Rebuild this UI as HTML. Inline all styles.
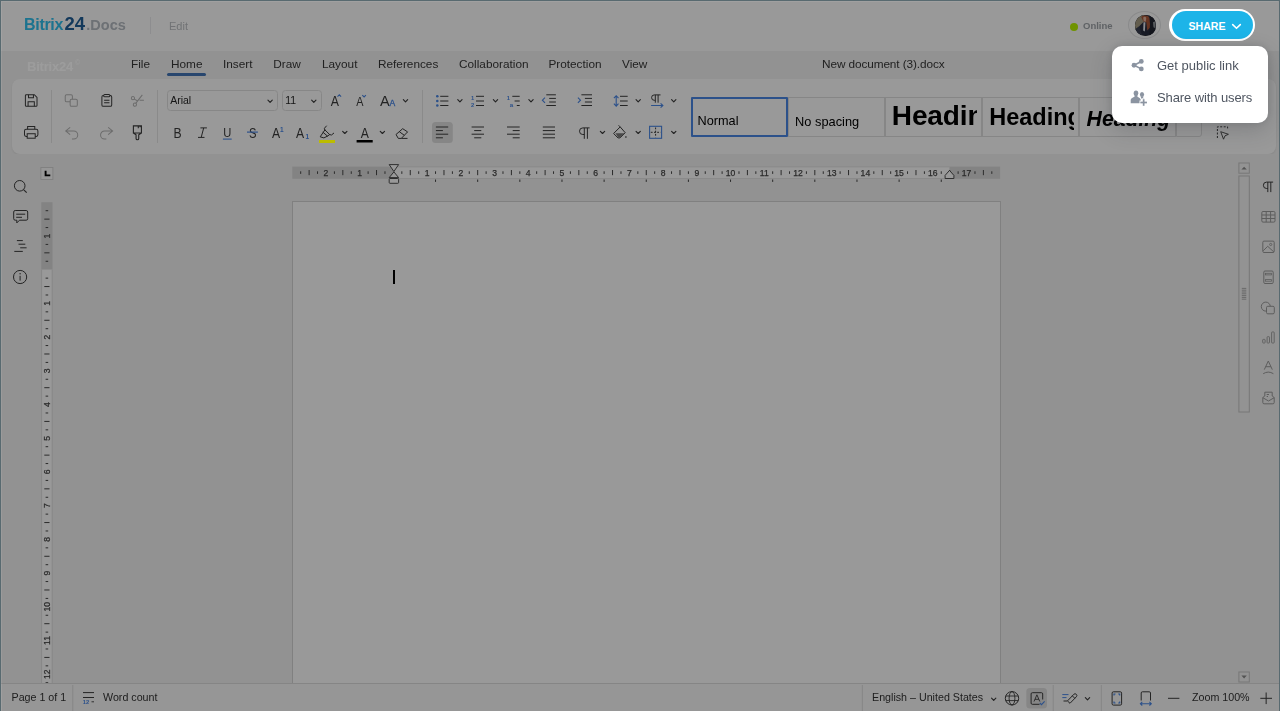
<!DOCTYPE html>
<html lang="en">
<head>
<meta charset="utf-8">
<title>Bitrix24.Docs</title>
<style>
*{box-sizing:border-box;margin:0;padding:0}
html,body{width:1280px;height:711px;overflow:hidden;background:#f3f3f3;font-family:"Liberation Sans",Arial,sans-serif;color:#333}
.abs{position:absolute}
#app{position:absolute;left:0;top:0;width:1280px;height:711px;overflow:hidden;background:#f3f3f3;will-change:transform}
#hdr{position:absolute;left:0;top:0;width:1280px;height:50.5px;background:#fff}
#logo{position:absolute;left:24px;top:12px;font-weight:bold;font-size:16px;line-height:24px;letter-spacing:-0.3px;white-space:nowrap}
#logo .b{color:#2fc0ee}
#logo .n{color:#215f98;font-size:18.5px;letter-spacing:-0.2px;margin-left:1.5px}
#logo .d{color:#b6bcc3;font-size:14.5px;letter-spacing:0;margin-left:1.5px}
#hsep{position:absolute;left:150px;top:17px;width:1px;height:17px;background:#ebecee}
#edit{position:absolute;left:169px;top:19px;font-size:11px;line-height:14px;color:#bcbfc3}
#online{position:absolute;left:1083px;top:20px;font-size:9.5px;line-height:12px;font-weight:bold;color:#9fa4a9;letter-spacing:0}
#odot{position:absolute;left:1070px;top:23px;width:8px;height:8px;border-radius:50%;background:#b9f500}
#avring{position:absolute;left:1128px;top:11px;width:33px;height:28px;border-radius:50%;border:1px solid #e6e7e8}
#av{position:absolute;left:1135px;top:15px;width:20.5px;height:20.5px;border-radius:50%;overflow:hidden;background:#2a2a30}
#tabs{position:absolute;left:0;top:51px;width:1280px;height:29px}
.tab{position:absolute;top:6px;font-size:11.8px;line-height:14px;color:#383838;white-space:nowrap}
#hline{position:absolute;left:166.8px;top:22.1px;width:39.4px;height:2.9px;background:#4375b7;border-radius:1.5px}
#ghost{position:absolute;left:27px;top:58.7px;font-size:13px;line-height:16px;font-weight:bold;color:#fff;opacity:.1;letter-spacing:-0.2px}
#ghost sup{font-size:7px;font-weight:normal;position:relative;top:-1px;left:2px;vertical-align:top;line-height:10px}
#tb{position:absolute;left:12px;top:79px;width:1264px;height:75px;background:#fff;border-radius:8px;box-shadow:0 1px 2px rgba(0,0,0,.07)}
.vsep{position:absolute;top:10.5px;width:1px;height:53px;background:#e7e7e7}
.combo{position:absolute;top:10.5px;height:21px;border:1px solid #e2e2e2;border-radius:3.5px;font-size:10.5px;line-height:19.6px;color:#262626;padding-left:2.2px;background:#fff}
.ic{position:absolute;overflow:visible}
.chev{position:absolute;width:7px;height:5px}
#alsel{position:absolute;left:420px;top:42px;width:20px;height:21px;border-radius:3px;background:#e0e0e0}
#gal{position:absolute;left:679.1px;top:17.5px;height:40px;width:512px;overflow:hidden}
.st{position:absolute;top:0;height:40px;width:98px;border:1px solid #e0e0e0;overflow:hidden;color:#000;white-space:nowrap}
.ci{position:absolute;left:6px;top:0;width:85.5px;height:38px;overflow:hidden}
.st span{position:absolute;left:0;bottom:5px;line-height:1}
#ws{position:absolute;left:0;top:154px;width:1280px;height:530px;background:#f3f3f3}
#page{position:absolute;left:291.5px;top:201.1px;width:709.3px;height:520px;background:#fff;border:1px solid #d6d6d6}
#caret{position:absolute;left:393px;top:270px;width:2px;height:14px;background:#000}
#sb{position:absolute;left:0;top:683px;width:1280px;height:28px;background:#fbfbfb;border-top:1px solid #dedede;font-size:10.7px;color:#333}
#sb .t{position:absolute;top:7px;line-height:13px;white-space:nowrap}
#ov{position:absolute;left:0;top:0;width:1280px;height:711px;background:rgba(0,0,0,.4)}
#frame{position:absolute;left:0;top:0;width:1280px;height:711px;border:1px solid #586a70;border-bottom:none;pointer-events:none}
#frame2{position:absolute;left:1px;top:1px;width:1277px;height:710px;border-left:1px solid rgba(255,255,255,.09);border-top:1px solid rgba(255,255,255,.07);pointer-events:none}
#ring{position:absolute;left:1169.3px;top:8.6px;width:85.7px;height:32.5px;border-radius:16.3px;background:#fff}
#share{position:absolute;left:1171.9px;top:11px;width:80.7px;height:27.9px;border-radius:14px;background:#1db4e8;color:#fff;font-weight:bold;font-size:10.6px;line-height:30px;letter-spacing:0;padding-left:16.6px}
#pop{position:absolute;left:1112px;top:46.3px;width:156px;height:76.7px;border-radius:10px;background:#fff;box-shadow:0 7px 21px rgba(40,46,56,.22),0 -1px 8px rgba(40,46,56,.12)}
.mi{position:absolute;left:45px;font-size:13px;line-height:16px;color:#4f5661;white-space:nowrap}
</style>
</head>
<body>
<div id="app">
  <div id="hdr">
    <div id="logo"><span class="b">Bitrix</span><span class="n">24</span><span class="d">.Docs</span></div>
    <div id="hsep"></div>
    <div id="edit">Edit</div>
    <div id="odot"></div>
    <div id="online">Online</div>
    <div id="avring"></div>
    <div id="av"><svg width="20.5" height="20.5" viewBox="0 0 20 20"><rect width="20" height="20" fill="#2b3042"/><path d="M0 0H9V6L5 10L2 14H0Z" fill="#a59c83"/><path d="M6 2C8 0 13 0 14 3L15 12L12 15L11 7L8 6Z" fill="#a8573a"/><path d="M8 2.5C9 1.5 10.5 1.5 11 3L10.5 6.5L8.5 6Z" fill="#e3b39b"/><path d="M8.3 7L10.2 7L9.6 16L8 15Z" fill="#e6e9f0"/><path d="M15 2H20V20H14Z" fill="#20242f"/><path d="M17.5 7L20 6V13L18 12Z" fill="#8f9499"/><path d="M0 14L4 11L7 20H0Z" fill="#3a3f50"/></svg></div>
  </div>
  <div id="tabs">
    <div class="tab" style="left:131px">File</div>
    <div class="tab" style="left:171px">Home</div>
    <div class="tab" style="left:223px">Insert</div>
    <div class="tab" style="left:273.3px">Draw</div>
    <div class="tab" style="left:322px">Layout</div>
    <div class="tab" style="left:378px">References</div>
    <div class="tab" style="left:459px">Collaboration</div>
    <div class="tab" style="left:548.4px">Protection</div>
    <div class="tab" style="left:622px">View</div>
    <div class="tab" style="left:822px;letter-spacing:-0.1px">New document (3).docx</div>
    <div id="hline"></div>
  </div>
  <div id="tb">
    <div class="vsep" style="left:39px"></div>
    <div class="vsep" style="left:145px"></div>
    <div class="vsep" style="left:410px"></div>
    <div class="combo" style="left:155px;width:111px">Arial</div>
    <div class="combo" style="left:270px;width:40px">11</div>
    <div id="gal">
      <div class="st" style="left:0;width:97px;border:none"><div class="ci"><span style="font-size:12.7px;left:0.5px;bottom:6.4px">Normal</span></div></div>
      <div class="st" style="left:96.500px;width:97.5px"><div class="ci"><span style="font-size:12.8px;left:0.5px;bottom:6.4px">No spacing</span></div></div>
      <div class="st" style="left:193.500px;width:97.5px"><div class="ci"><span style="font-size:28px;font-weight:bold;left:0.2px;bottom:5.9px;letter-spacing:-0.1px">Heading 1</span></div></div>
      <div class="st" style="left:290.500px;width:97.5px"><div class="ci"><span style="font-size:23.5px;font-weight:bold;left:0.6px;bottom:5.6px">Heading 2</span></div></div>
      <div class="st" style="left:387.500px;width:97.5px"><div class="ci"><span style="font-size:21.2px;font-weight:bold;font-style:italic;left:1px;bottom:6.2px">Heading 3</span></div></div>
      <div class="st" style="left:484.500px;width:26px;border-radius:0 0 3px 0"></div>
      <div class="abs" style="left:0;top:0;width:96.5px;height:40px;border:2px solid #4a87e7;border-radius:1px"></div>
    </div>
  </div>
  <svg class="abs" style="left:0;top:80px" width="1280" height="74" viewBox="0 80 1280 74"><g transform="translate(22.27 91.57) scale(0.893)" fill="none" stroke="#3c3c3c" stroke-width="1.12" ><path d="M4.500 3.500H13.500L16.500 6.500V15.500a1 1 0 0 1-1 1H4.500a1 1 0 0 1-1-1V4.500a1 1 0 0 1 1-1Z"/><path d="M7 3.500V7H12.500V3.500"/><path d="M6.500 16.500V11.500H13.500V16.500"/></g><g transform="translate(22.27 123.47) scale(0.893)" fill="none" stroke="#3c3c3c" stroke-width="1.12" ><path d="M6 6.500V3.500H14V6.500"/><rect x="2.500" y="6.500" width="15" height="8" rx="1.800"/><rect x="5.500" y="11.500" width="9" height="5" fill="#fff"/></g><g transform="translate(62.57 91.57) scale(0.893)" fill="none" stroke="#b4b4b4" stroke-width="1.12" ><rect x="3" y="3.500" width="8" height="8" rx="1.500"/><rect x="8.500" y="8.500" width="8" height="8" rx="1.500" fill="#fff"/></g><g transform="translate(97.87 91.57) scale(0.893)" fill="none" stroke="#3c3c3c" stroke-width="1.12" ><rect x="4.500" y="4.500" width="11" height="12" rx="1.500"/><rect x="6.500" y="3.200" width="7" height="2.600" rx="1.200" fill="#fff"/><path d="M7 9.700H13M7 12.500H13"/></g><g transform="translate(128.57 91.57) scale(0.893)" fill="none" stroke="#b4b4b4" stroke-width="1.12" ><circle cx="4.900" cy="7.400" r="1.800"/><circle cx="7.100" cy="14.700" r="1.800"/><path d="M8 13.200L15.400 3.700M6.400 8.500L10.300 10.600M12.300 9.700H17.200"/></g><g transform="translate(62.57 124.27) scale(0.893)" fill="none" stroke="#b4b4b4" stroke-width="1.12" ><path d="M8.500 3.500L3.500 7.500L8.500 11.500M3.500 7.500H12.500A4.500 4.500 0 0 1 12.500 16.500H10.500"/></g><g transform="translate(97.87 124.27) scale(0.893)" fill="none" stroke="#b4b4b4" stroke-width="1.12" ><path d="M11.500 3.500L16.500 7.500L11.500 11.500M16.500 7.500H7.500A4.500 4.500 0 0 0 7.500 16.500H9.500"/></g><g transform="translate(128.47 123.67) scale(0.893)" fill="none" stroke="#3c3c3c" stroke-width="1.23" ><path d="M5.500 2.500H14.500V10.500H5.500ZM11 2.500V5M13 2.500V4M5.500 10.500L8.500 12.500V16.500a1.500 1.500 0 0 0 3 0V12.500L14.500 10.500"/></g><text transform="translate(177.5 137.7) scale(0.87 1)" font-family="Liberation Sans, sans-serif" font-size="14" fill="#3c3c3c" font-weight="normal" text-anchor="middle" >B</text><path d="M200.4 127.9H206.9M198 137.4H204.5M203.7 127.9L201.2 137.4" stroke="#3c3c3c" stroke-width="1" fill="none"/><text transform="translate(227.3 136.8) scale(0.86 1)" font-family="Liberation Sans, sans-serif" font-size="13" fill="#3c3c3c" font-weight="normal" text-anchor="middle" >U</text><path d="M222.90 139.10H231.70" stroke="#4a87e7" stroke-width="1.1" fill="none"/><text transform="translate(252.7 137.7) scale(0.8 1)" font-family="Liberation Sans, sans-serif" font-size="14" fill="#3c3c3c" font-weight="normal" text-anchor="middle" >S</text><path d="M247.00 132.10H257.90" stroke="#4a87e7" stroke-width="1.2" fill="none"/><text transform="translate(276 137.7) scale(0.87 1)" font-family="Liberation Sans, sans-serif" font-size="14" fill="#3c3c3c" font-weight="normal" text-anchor="middle" >A</text><text transform="translate(281.9 131.6) scale(1 1)" font-family="Liberation Sans, sans-serif" font-size="6.5" fill="#4a87e7" font-weight="bold" text-anchor="middle" >1</text><text transform="translate(300.1 137.7) scale(0.87 1)" font-family="Liberation Sans, sans-serif" font-size="14" fill="#3c3c3c" font-weight="normal" text-anchor="middle" >A</text><text transform="translate(307.2 138.9) scale(1 1)" font-family="Liberation Sans, sans-serif" font-size="6.5" fill="#4a87e7" font-weight="bold" text-anchor="middle" >1</text><path d="M326.4 126L324.4 128.3L324.8 130M324.8 130L320.200 136.800L323.900 137.900L327.500 136.100L329.700 134.600L325 130M323.100 132.400L327.500 136.100M329.700 134.600L331.500 135L333.700 133.200" stroke="#3c3c3c" stroke-width="1" fill="none" stroke-linejoin="round" stroke-linecap="round"/><path d="M342.65 131.30L344.80 133.50L346.95 131.30" fill="none" stroke="#3c3c3c" stroke-width="1.15" stroke-linecap="round" stroke-linejoin="round"/><text transform="translate(364.9 137.7) scale(0.87 1)" font-family="Liberation Sans, sans-serif" font-size="14" fill="#3c3c3c" font-weight="normal" text-anchor="middle" >A</text><rect x="356.6" y="140" width="16.1" height="2.5" fill="#000"/><path d="M380.25 131.30L382.40 133.50L384.55 131.30" fill="none" stroke="#3c3c3c" stroke-width="1.15" stroke-linecap="round" stroke-linejoin="round"/><path d="M396 134.500L402.700 128.700L407.600 131.900L401.300 138.400H398.300ZM399.300 131.700L404.300 135.300M401.300 138.400H407.500" stroke="#3c3c3c" stroke-width="1" fill="none" stroke-linejoin="round"/><text transform="translate(334.8 105.7) scale(0.88 1)" font-family="Liberation Sans, sans-serif" font-size="14" fill="#3c3c3c" font-weight="normal" text-anchor="middle" >A</text><path d="M337.500 96.600L339.300 94.800L341.100 96.600" stroke="#4a87e7" stroke-width="1.1" fill="none"/><text transform="translate(359.8 105.7) scale(0.88 1)" font-family="Liberation Sans, sans-serif" font-size="12.3" fill="#3c3c3c" font-weight="normal" text-anchor="middle" >A</text><path d="M362.300 95.100L364.100 96.900L365.900 95.100" stroke="#4a87e7" stroke-width="1.1" fill="none"/><text transform="translate(384.8 105.7) scale(1 1)" font-family="Liberation Sans, sans-serif" font-size="14.5" fill="#3c3c3c" font-weight="normal" text-anchor="middle" >A</text><text transform="translate(392.3 105.7) scale(1 1)" font-family="Liberation Sans, sans-serif" font-size="8.6" fill="#4a87e7" font-weight="normal" text-anchor="middle" stroke="#4a87e7" stroke-width="0.3">A</text><path d="M403.35 99.65L405.50 101.85L407.65 99.65" fill="none" stroke="#3c3c3c" stroke-width="1.15" stroke-linecap="round" stroke-linejoin="round"/><circle cx="437.3" cy="96.3" r="1.3" fill="#4a87e7"/><path d="M440.20 96.30H448.40" stroke="#3c3c3c" stroke-width="1.0" fill="none"/><circle cx="437.3" cy="101.0" r="1.3" fill="#4a87e7"/><path d="M440.20 101.00H448.40" stroke="#3c3c3c" stroke-width="1.0" fill="none"/><circle cx="437.3" cy="105.5" r="1.3" fill="#4a87e7"/><path d="M440.20 105.50H448.40" stroke="#3c3c3c" stroke-width="1.0" fill="none"/><path d="M457.75 99.65L459.90 101.85L462.05 99.65" fill="none" stroke="#3c3c3c" stroke-width="1.15" stroke-linecap="round" stroke-linejoin="round"/><text transform="translate(472.6 99.8) scale(1 1)" font-family="Liberation Sans, sans-serif" font-size="5.8" fill="#4a87e7" font-weight="bold" text-anchor="middle" >1</text><text transform="translate(472.6 106.9) scale(1 1)" font-family="Liberation Sans, sans-serif" font-size="5.8" fill="#4a87e7" font-weight="bold" text-anchor="middle" >2</text><path d="M476.00 96.30H484.00" stroke="#3c3c3c" stroke-width="1.0" fill="none"/><path d="M476.00 101.00H484.00" stroke="#3c3c3c" stroke-width="1.0" fill="none"/><path d="M476.00 105.50H484.00" stroke="#3c3c3c" stroke-width="1.0" fill="none"/><path d="M493.35 99.65L495.50 101.85L497.65 99.65" fill="none" stroke="#3c3c3c" stroke-width="1.15" stroke-linecap="round" stroke-linejoin="round"/><text transform="translate(508.3 99.8) scale(1 1)" font-family="Liberation Sans, sans-serif" font-size="5.8" fill="#4a87e7" font-weight="bold" text-anchor="middle" >1</text><text transform="translate(511.4 106.9) scale(1 1)" font-family="Liberation Sans, sans-serif" font-size="6.2" fill="#4a87e7" font-weight="bold" text-anchor="middle" >a</text><path d="M512.30 96.30H519.70" stroke="#3c3c3c" stroke-width="1.0" fill="none"/><path d="M514.60 101.00H519.70" stroke="#3c3c3c" stroke-width="1.0" fill="none"/><path d="M516.80 105.50H519.70" stroke="#3c3c3c" stroke-width="1.0" fill="none"/><path d="M528.85 99.65L531.00 101.85L533.15 99.65" fill="none" stroke="#3c3c3c" stroke-width="1.15" stroke-linecap="round" stroke-linejoin="round"/><path d="M546.30 94.80H555.90" stroke="#3c3c3c" stroke-width="1.0" fill="none"/><path d="M549.20 98.40H555.90" stroke="#3c3c3c" stroke-width="1.0" fill="none"/><path d="M549.20 102.00H555.90" stroke="#3c3c3c" stroke-width="1.0" fill="none"/><path d="M546.30 105.50H555.90" stroke="#3c3c3c" stroke-width="1.0" fill="none"/><path d="M545 97.600L542.400 100.200L545 102.800" stroke="#4a87e7" stroke-width="1.1" fill="none"/><path d="M581.40 94.80H592.00" stroke="#3c3c3c" stroke-width="1.0" fill="none"/><path d="M584.90 98.40H592.00" stroke="#3c3c3c" stroke-width="1.0" fill="none"/><path d="M584.90 102.00H592.00" stroke="#3c3c3c" stroke-width="1.0" fill="none"/><path d="M581.40 105.50H592.00" stroke="#3c3c3c" stroke-width="1.0" fill="none"/><path d="M577.900 97.600L580.500 100.200L577.900 102.800" stroke="#4a87e7" stroke-width="1.1" fill="none"/><path d="M616.200 95.800V106M613.900 98.100L616.200 95.700L618.500 98.100M613.900 103.700L616.200 106.100L618.500 103.700" stroke="#4a87e7" stroke-width="1.1" fill="none"/><path d="M620.00 96.30H627.70" stroke="#3c3c3c" stroke-width="1.0" fill="none"/><path d="M620.00 101.00H627.70" stroke="#3c3c3c" stroke-width="1.0" fill="none"/><path d="M620.00 105.50H627.70" stroke="#3c3c3c" stroke-width="1.0" fill="none"/><path d="M636.05 99.65L638.20 101.85L640.35 99.65" fill="none" stroke="#3c3c3c" stroke-width="1.15" stroke-linecap="round" stroke-linejoin="round"/><path d="M660.500 94.900H654.300a2.700 2.700 0 0 0 0 5.400H655.300M655.300 94.900V102.700M658.100 94.900V102.700" stroke="#3c3c3c" stroke-width="1" fill="none"/><path d="M651.100 105.500H662.800M660.600 103.300L662.900 105.500L660.600 107.700" stroke="#4a87e7" stroke-width="1.1" fill="none"/><path d="M671.60 99.65L673.75 101.85L675.90 99.65" fill="none" stroke="#3c3c3c" stroke-width="1.15" stroke-linecap="round" stroke-linejoin="round"/><rect x="432" y="122.1" width="20.8" height="20.9" rx="3.5" fill="#e0e0e0"/><path d="M435.90 127.00H448.20" stroke="#3c3c3c" stroke-width="1.0" fill="none"/><path d="M471.60 127.00H484.00" stroke="#3c3c3c" stroke-width="1.0" fill="none"/><path d="M507.00 127.00H519.70" stroke="#3c3c3c" stroke-width="1.0" fill="none"/><path d="M542.80 127.00H555.00" stroke="#3c3c3c" stroke-width="1.0" fill="none"/><path d="M435.90 130.60H442.90" stroke="#3c3c3c" stroke-width="1.0" fill="none"/><path d="M474.20 130.60H481.30" stroke="#3c3c3c" stroke-width="1.0" fill="none"/><path d="M512.70 130.60H519.70" stroke="#3c3c3c" stroke-width="1.0" fill="none"/><path d="M542.80 130.60H555.00" stroke="#3c3c3c" stroke-width="1.0" fill="none"/><path d="M435.90 134.20H448.20" stroke="#3c3c3c" stroke-width="1.0" fill="none"/><path d="M471.60 134.20H484.00" stroke="#3c3c3c" stroke-width="1.0" fill="none"/><path d="M507.00 134.20H519.70" stroke="#3c3c3c" stroke-width="1.0" fill="none"/><path d="M542.80 134.20H555.00" stroke="#3c3c3c" stroke-width="1.0" fill="none"/><path d="M435.90 137.80H442.90" stroke="#3c3c3c" stroke-width="1.0" fill="none"/><path d="M474.20 137.80H481.30" stroke="#3c3c3c" stroke-width="1.0" fill="none"/><path d="M512.70 137.80H519.70" stroke="#3c3c3c" stroke-width="1.0" fill="none"/><path d="M542.80 137.80H555.00" stroke="#3c3c3c" stroke-width="1.0" fill="none"/><path d="M589.600 127.900H582.800a3.300 3.300 0 0 0 0 6.600H584.300M584.300 127.900V138.800M587.400 127.900V138.800" stroke="#3c3c3c" stroke-width="1" fill="none"/><path d="M600.35 131.30L602.50 133.50L604.65 131.30" fill="none" stroke="#3c3c3c" stroke-width="1.15" stroke-linecap="round" stroke-linejoin="round"/><path d="M618.600 125.300L620.200 126.900M620.200 126.900L613.600 133.500L618 137.900H620L625.200 132.700L620.200 126.900Z" stroke="#3c3c3c" stroke-width="1" fill="none" stroke-linejoin="round"/><path d="M615.400 133.200H624.400L620 137.400H618.200Z" fill="#7a7a7a" stroke="none"/><circle cx="625.900" cy="137" r="0.900" fill="#777"/><path d="M636.05 131.30L638.20 133.50L640.35 131.30" fill="none" stroke="#3c3c3c" stroke-width="1.15" stroke-linecap="round" stroke-linejoin="round"/><rect x="649.600" y="126.300" width="12" height="12" stroke="#4a87e7" stroke-width="1.1" fill="none"/><path d="M655.600 127.500V137.300M650.800 132.300H660.600" stroke="#3c3c3c" stroke-width="1" stroke-dasharray="1.8 1.4" fill="none"/><path d="M671.60 131.30L673.75 133.50L675.90 131.30" fill="none" stroke="#3c3c3c" stroke-width="1.15" stroke-linecap="round" stroke-linejoin="round"/><path d="M267.95 100.20L270.10 102.40L272.25 100.20" fill="none" stroke="#3c3c3c" stroke-width="1.15" stroke-linecap="round" stroke-linejoin="round"/><path d="M311.65 100.20L313.80 102.40L315.95 100.20" fill="none" stroke="#3c3c3c" stroke-width="1.15" stroke-linecap="round" stroke-linejoin="round"/><path d="M1217.400 138V126.800H1227.600V129.500" stroke="#3c3c3c" stroke-width="1" stroke-dasharray="2 1.500" fill="none"/><path d="M1220.700 131.700L1228.400 134.300L1225 135.800L1223.500 139.200Z" stroke="#3c3c3c" stroke-width="0.9" fill="none" stroke-linejoin="round"/></svg>
  <div id="ws"></div>
  <div id="page"></div>
  <div id="caret"></div>
  <svg class="abs" style="left:0;top:154px" width="1280" height="530" viewBox="0 154 1280 530"><rect x="292.3" y="166.6" width="707.80" height="12.20" fill="#dbdbdb"/><rect x="393.4" y="166.6" width="556.00" height="12.20" fill="#ffffff"/><path d="M393.40 166.90H949.40" stroke="#e2e2e2" stroke-width="0.8" fill="none"/><path d="M393.40 178.50H949.40" stroke="#e2e2e2" stroke-width="0.8" fill="none"/><path d="M384.97 171.30V173.90" stroke="#484848" stroke-width="1.0" fill="none"/><path d="M376.54 170.00V175.20" stroke="#484848" stroke-width="1.0" fill="none"/><path d="M368.11 171.30V173.90" stroke="#484848" stroke-width="1.0" fill="none"/><path d="M351.26 171.30V173.90" stroke="#484848" stroke-width="1.0" fill="none"/><path d="M342.83 170.00V175.20" stroke="#484848" stroke-width="1.0" fill="none"/><path d="M334.40 171.30V173.90" stroke="#484848" stroke-width="1.0" fill="none"/><path d="M317.54 171.30V173.90" stroke="#484848" stroke-width="1.0" fill="none"/><path d="M309.12 170.00V175.20" stroke="#484848" stroke-width="1.0" fill="none"/><path d="M300.69 171.30V173.90" stroke="#484848" stroke-width="1.0" fill="none"/><path d="M401.83 171.30V173.90" stroke="#484848" stroke-width="1.0" fill="none"/><path d="M410.26 170.00V175.20" stroke="#484848" stroke-width="1.0" fill="none"/><path d="M418.69 171.30V173.90" stroke="#484848" stroke-width="1.0" fill="none"/><path d="M435.54 171.30V173.90" stroke="#484848" stroke-width="1.0" fill="none"/><path d="M443.97 170.00V175.20" stroke="#484848" stroke-width="1.0" fill="none"/><path d="M452.40 171.30V173.90" stroke="#484848" stroke-width="1.0" fill="none"/><path d="M469.26 171.30V173.90" stroke="#484848" stroke-width="1.0" fill="none"/><path d="M477.68 170.00V175.20" stroke="#484848" stroke-width="1.0" fill="none"/><path d="M486.11 171.30V173.90" stroke="#484848" stroke-width="1.0" fill="none"/><path d="M502.97 171.30V173.90" stroke="#484848" stroke-width="1.0" fill="none"/><path d="M511.40 170.00V175.20" stroke="#484848" stroke-width="1.0" fill="none"/><path d="M519.83 171.30V173.90" stroke="#484848" stroke-width="1.0" fill="none"/><path d="M536.68 171.30V173.90" stroke="#484848" stroke-width="1.0" fill="none"/><path d="M545.11 170.00V175.20" stroke="#484848" stroke-width="1.0" fill="none"/><path d="M553.54 171.30V173.90" stroke="#484848" stroke-width="1.0" fill="none"/><path d="M570.40 171.30V173.90" stroke="#484848" stroke-width="1.0" fill="none"/><path d="M578.83 170.00V175.20" stroke="#484848" stroke-width="1.0" fill="none"/><path d="M587.26 171.30V173.90" stroke="#484848" stroke-width="1.0" fill="none"/><path d="M604.11 171.30V173.90" stroke="#484848" stroke-width="1.0" fill="none"/><path d="M612.54 170.00V175.20" stroke="#484848" stroke-width="1.0" fill="none"/><path d="M620.97 171.30V173.90" stroke="#484848" stroke-width="1.0" fill="none"/><path d="M637.83 171.30V173.90" stroke="#484848" stroke-width="1.0" fill="none"/><path d="M646.25 170.00V175.20" stroke="#484848" stroke-width="1.0" fill="none"/><path d="M654.68 171.30V173.90" stroke="#484848" stroke-width="1.0" fill="none"/><path d="M671.54 171.30V173.90" stroke="#484848" stroke-width="1.0" fill="none"/><path d="M679.97 170.00V175.20" stroke="#484848" stroke-width="1.0" fill="none"/><path d="M688.40 171.30V173.90" stroke="#484848" stroke-width="1.0" fill="none"/><path d="M705.25 171.30V173.90" stroke="#484848" stroke-width="1.0" fill="none"/><path d="M713.68 170.00V175.20" stroke="#484848" stroke-width="1.0" fill="none"/><path d="M722.11 171.30V173.90" stroke="#484848" stroke-width="1.0" fill="none"/><path d="M738.97 171.30V173.90" stroke="#484848" stroke-width="1.0" fill="none"/><path d="M747.40 170.00V175.20" stroke="#484848" stroke-width="1.0" fill="none"/><path d="M755.83 171.30V173.90" stroke="#484848" stroke-width="1.0" fill="none"/><path d="M772.68 171.30V173.90" stroke="#484848" stroke-width="1.0" fill="none"/><path d="M781.11 170.00V175.20" stroke="#484848" stroke-width="1.0" fill="none"/><path d="M789.54 171.30V173.90" stroke="#484848" stroke-width="1.0" fill="none"/><path d="M806.40 171.30V173.90" stroke="#484848" stroke-width="1.0" fill="none"/><path d="M814.82 170.00V175.20" stroke="#484848" stroke-width="1.0" fill="none"/><path d="M823.25 171.30V173.90" stroke="#484848" stroke-width="1.0" fill="none"/><path d="M840.11 171.30V173.90" stroke="#484848" stroke-width="1.0" fill="none"/><path d="M848.54 170.00V175.20" stroke="#484848" stroke-width="1.0" fill="none"/><path d="M856.97 171.30V173.90" stroke="#484848" stroke-width="1.0" fill="none"/><path d="M873.82 171.30V173.90" stroke="#484848" stroke-width="1.0" fill="none"/><path d="M882.25 170.00V175.20" stroke="#484848" stroke-width="1.0" fill="none"/><path d="M890.68 171.30V173.90" stroke="#484848" stroke-width="1.0" fill="none"/><path d="M907.54 171.30V173.90" stroke="#484848" stroke-width="1.0" fill="none"/><path d="M915.97 170.00V175.20" stroke="#484848" stroke-width="1.0" fill="none"/><path d="M924.40 171.30V173.90" stroke="#484848" stroke-width="1.0" fill="none"/><path d="M941.25 171.30V173.90" stroke="#484848" stroke-width="1.0" fill="none"/><path d="M949.68 170.00V175.20" stroke="#484848" stroke-width="1.0" fill="none"/><path d="M958.11 171.30V173.90" stroke="#484848" stroke-width="1.0" fill="none"/><path d="M974.97 171.30V173.90" stroke="#484848" stroke-width="1.0" fill="none"/><path d="M983.39 170.00V175.20" stroke="#484848" stroke-width="1.0" fill="none"/><path d="M991.82 171.30V173.90" stroke="#484848" stroke-width="1.0" fill="none"/><text x="359.69" y="175.70" font-family="Liberation Sans, sans-serif" font-size="8.6" fill="#484848" stroke="#484848" stroke-width="0.25" text-anchor="middle">1</text><text x="325.97" y="175.70" font-family="Liberation Sans, sans-serif" font-size="8.6" fill="#484848" stroke="#484848" stroke-width="0.25" text-anchor="middle">2</text><text x="427.11" y="175.70" font-family="Liberation Sans, sans-serif" font-size="8.6" fill="#484848" stroke="#484848" stroke-width="0.25" text-anchor="middle">1</text><text x="460.83" y="175.70" font-family="Liberation Sans, sans-serif" font-size="8.6" fill="#484848" stroke="#484848" stroke-width="0.25" text-anchor="middle">2</text><text x="494.54" y="175.70" font-family="Liberation Sans, sans-serif" font-size="8.6" fill="#484848" stroke="#484848" stroke-width="0.25" text-anchor="middle">3</text><text x="528.26" y="175.70" font-family="Liberation Sans, sans-serif" font-size="8.6" fill="#484848" stroke="#484848" stroke-width="0.25" text-anchor="middle">4</text><text x="561.97" y="175.70" font-family="Liberation Sans, sans-serif" font-size="8.6" fill="#484848" stroke="#484848" stroke-width="0.25" text-anchor="middle">5</text><text x="595.68" y="175.70" font-family="Liberation Sans, sans-serif" font-size="8.6" fill="#484848" stroke="#484848" stroke-width="0.25" text-anchor="middle">6</text><text x="629.40" y="175.70" font-family="Liberation Sans, sans-serif" font-size="8.6" fill="#484848" stroke="#484848" stroke-width="0.25" text-anchor="middle">7</text><text x="663.11" y="175.70" font-family="Liberation Sans, sans-serif" font-size="8.6" fill="#484848" stroke="#484848" stroke-width="0.25" text-anchor="middle">8</text><text x="696.83" y="175.70" font-family="Liberation Sans, sans-serif" font-size="8.6" fill="#484848" stroke="#484848" stroke-width="0.25" text-anchor="middle">9</text><text x="730.54" y="175.70" font-family="Liberation Sans, sans-serif" font-size="8.6" fill="#484848" stroke="#484848" stroke-width="0.25" text-anchor="middle">10</text><text x="764.25" y="175.70" font-family="Liberation Sans, sans-serif" font-size="8.6" fill="#484848" stroke="#484848" stroke-width="0.25" text-anchor="middle">11</text><text x="797.97" y="175.70" font-family="Liberation Sans, sans-serif" font-size="8.6" fill="#484848" stroke="#484848" stroke-width="0.25" text-anchor="middle">12</text><text x="831.68" y="175.70" font-family="Liberation Sans, sans-serif" font-size="8.6" fill="#484848" stroke="#484848" stroke-width="0.25" text-anchor="middle">13</text><text x="865.40" y="175.70" font-family="Liberation Sans, sans-serif" font-size="8.6" fill="#484848" stroke="#484848" stroke-width="0.25" text-anchor="middle">14</text><text x="899.11" y="175.70" font-family="Liberation Sans, sans-serif" font-size="8.6" fill="#484848" stroke="#484848" stroke-width="0.25" text-anchor="middle">15</text><text x="932.82" y="175.70" font-family="Liberation Sans, sans-serif" font-size="8.6" fill="#484848" stroke="#484848" stroke-width="0.25" text-anchor="middle">16</text><text x="966.54" y="175.70" font-family="Liberation Sans, sans-serif" font-size="8.6" fill="#484848" stroke="#484848" stroke-width="0.25" text-anchor="middle">17</text><path d="M435.54 179.50V181.90" stroke="#444" stroke-width="1.0" fill="none"/><path d="M477.68 179.50V181.90" stroke="#444" stroke-width="1.0" fill="none"/><path d="M519.83 179.50V181.90" stroke="#444" stroke-width="1.0" fill="none"/><path d="M561.97 179.50V181.90" stroke="#444" stroke-width="1.0" fill="none"/><path d="M604.11 179.50V181.90" stroke="#444" stroke-width="1.0" fill="none"/><path d="M646.25 179.50V181.90" stroke="#444" stroke-width="1.0" fill="none"/><path d="M688.40 179.50V181.90" stroke="#444" stroke-width="1.0" fill="none"/><path d="M730.54 179.50V181.90" stroke="#444" stroke-width="1.0" fill="none"/><path d="M772.68 179.50V181.90" stroke="#444" stroke-width="1.0" fill="none"/><path d="M814.82 179.50V181.90" stroke="#444" stroke-width="1.0" fill="none"/><path d="M856.97 179.50V181.90" stroke="#444" stroke-width="1.0" fill="none"/><path d="M899.11 179.50V181.90" stroke="#444" stroke-width="1.0" fill="none"/><path d="M941.25 179.50V181.90" stroke="#444" stroke-width="1.0" fill="none"/><path d="M389.2 164.6H398.6L393.9 171.5Z" fill="#fff" stroke="#3c3c3c" stroke-width="0.9" stroke-linejoin="round"/><path d="M393.9 171.9L398.6 177.6H389.2Z" fill="#fff" stroke="#3c3c3c" stroke-width="0.9" stroke-linejoin="round"/><rect x="389.2" y="178.5" width="9.4" height="4.8" rx="0.8" fill="#fff" stroke="#3c3c3c" stroke-width="0.9"/><path d="M949.5 170.4L953.9 175.4V178.5H945.1V175.4Z" fill="#fff" stroke="#3c3c3c" stroke-width="0.9" stroke-linejoin="round"/><rect x="40.9" y="167.5" width="12" height="12" fill="#fcfcfc" stroke="#d4d4d4" stroke-width="0.9"/><path d="M45.6 170.7V175.4H50.3" fill="none" stroke="#000" stroke-width="1.9"/><rect x="41.3" y="202.2" width="11.20" height="67.50" fill="#dbdbdb"/><rect x="41.3" y="269.7" width="11.20" height="414.30" fill="#ffffff"/><path d="M41.60 269.70V684.00" stroke="#dcdcdc" stroke-width="0.9" fill="none"/><path d="M52.20 269.70V684.00" stroke="#dcdcdc" stroke-width="0.9" fill="none"/><path d="M45.60 261.27H48.20" stroke="#484848" stroke-width="1.0" fill="none"/><path d="M44.30 252.84H49.50" stroke="#484848" stroke-width="1.0" fill="none"/><path d="M45.60 244.41H48.20" stroke="#484848" stroke-width="1.0" fill="none"/><text transform="translate(50.00 235.99) rotate(-90)" font-family="Liberation Sans, sans-serif" font-size="8.6" fill="#484848" stroke="#484848" stroke-width="0.25" text-anchor="middle">1</text><path d="M45.60 227.56H48.20" stroke="#484848" stroke-width="1.0" fill="none"/><path d="M44.30 219.13H49.50" stroke="#484848" stroke-width="1.0" fill="none"/><path d="M45.60 210.70H48.20" stroke="#484848" stroke-width="1.0" fill="none"/><path d="M45.60 278.13H48.20" stroke="#484848" stroke-width="1.0" fill="none"/><path d="M44.30 286.56H49.50" stroke="#484848" stroke-width="1.0" fill="none"/><path d="M45.60 294.99H48.20" stroke="#484848" stroke-width="1.0" fill="none"/><text transform="translate(50.00 303.41) rotate(-90)" font-family="Liberation Sans, sans-serif" font-size="8.6" fill="#484848" stroke="#484848" stroke-width="0.25" text-anchor="middle">1</text><path d="M45.60 311.84H48.20" stroke="#484848" stroke-width="1.0" fill="none"/><path d="M44.30 320.27H49.50" stroke="#484848" stroke-width="1.0" fill="none"/><path d="M45.60 328.70H48.20" stroke="#484848" stroke-width="1.0" fill="none"/><text transform="translate(50.00 337.13) rotate(-90)" font-family="Liberation Sans, sans-serif" font-size="8.6" fill="#484848" stroke="#484848" stroke-width="0.25" text-anchor="middle">2</text><path d="M45.60 345.56H48.20" stroke="#484848" stroke-width="1.0" fill="none"/><path d="M44.30 353.99H49.50" stroke="#484848" stroke-width="1.0" fill="none"/><path d="M45.60 362.41H48.20" stroke="#484848" stroke-width="1.0" fill="none"/><text transform="translate(50.00 370.84) rotate(-90)" font-family="Liberation Sans, sans-serif" font-size="8.6" fill="#484848" stroke="#484848" stroke-width="0.25" text-anchor="middle">3</text><path d="M45.60 379.27H48.20" stroke="#484848" stroke-width="1.0" fill="none"/><path d="M44.30 387.70H49.50" stroke="#484848" stroke-width="1.0" fill="none"/><path d="M45.60 396.13H48.20" stroke="#484848" stroke-width="1.0" fill="none"/><text transform="translate(50.00 404.56) rotate(-90)" font-family="Liberation Sans, sans-serif" font-size="8.6" fill="#484848" stroke="#484848" stroke-width="0.25" text-anchor="middle">4</text><path d="M45.60 412.98H48.20" stroke="#484848" stroke-width="1.0" fill="none"/><path d="M44.30 421.41H49.50" stroke="#484848" stroke-width="1.0" fill="none"/><path d="M45.60 429.84H48.20" stroke="#484848" stroke-width="1.0" fill="none"/><text transform="translate(50.00 438.27) rotate(-90)" font-family="Liberation Sans, sans-serif" font-size="8.6" fill="#484848" stroke="#484848" stroke-width="0.25" text-anchor="middle">5</text><path d="M45.60 446.70H48.20" stroke="#484848" stroke-width="1.0" fill="none"/><path d="M44.30 455.13H49.50" stroke="#484848" stroke-width="1.0" fill="none"/><path d="M45.60 463.56H48.20" stroke="#484848" stroke-width="1.0" fill="none"/><text transform="translate(50.00 471.98) rotate(-90)" font-family="Liberation Sans, sans-serif" font-size="8.6" fill="#484848" stroke="#484848" stroke-width="0.25" text-anchor="middle">6</text><path d="M45.60 480.41H48.20" stroke="#484848" stroke-width="1.0" fill="none"/><path d="M44.30 488.84H49.50" stroke="#484848" stroke-width="1.0" fill="none"/><path d="M45.60 497.27H48.20" stroke="#484848" stroke-width="1.0" fill="none"/><text transform="translate(50.00 505.70) rotate(-90)" font-family="Liberation Sans, sans-serif" font-size="8.6" fill="#484848" stroke="#484848" stroke-width="0.25" text-anchor="middle">7</text><path d="M45.60 514.13H48.20" stroke="#484848" stroke-width="1.0" fill="none"/><path d="M44.30 522.55H49.50" stroke="#484848" stroke-width="1.0" fill="none"/><path d="M45.60 530.98H48.20" stroke="#484848" stroke-width="1.0" fill="none"/><text transform="translate(50.00 539.41) rotate(-90)" font-family="Liberation Sans, sans-serif" font-size="8.6" fill="#484848" stroke="#484848" stroke-width="0.25" text-anchor="middle">8</text><path d="M45.60 547.84H48.20" stroke="#484848" stroke-width="1.0" fill="none"/><path d="M44.30 556.27H49.50" stroke="#484848" stroke-width="1.0" fill="none"/><path d="M45.60 564.70H48.20" stroke="#484848" stroke-width="1.0" fill="none"/><text transform="translate(50.00 573.13) rotate(-90)" font-family="Liberation Sans, sans-serif" font-size="8.6" fill="#484848" stroke="#484848" stroke-width="0.25" text-anchor="middle">9</text><path d="M45.60 581.55H48.20" stroke="#484848" stroke-width="1.0" fill="none"/><path d="M44.30 589.98H49.50" stroke="#484848" stroke-width="1.0" fill="none"/><path d="M45.60 598.41H48.20" stroke="#484848" stroke-width="1.0" fill="none"/><text transform="translate(50.00 606.84) rotate(-90)" font-family="Liberation Sans, sans-serif" font-size="8.6" fill="#484848" stroke="#484848" stroke-width="0.25" text-anchor="middle">10</text><path d="M45.60 615.27H48.20" stroke="#484848" stroke-width="1.0" fill="none"/><path d="M44.30 623.70H49.50" stroke="#484848" stroke-width="1.0" fill="none"/><path d="M45.60 632.13H48.20" stroke="#484848" stroke-width="1.0" fill="none"/><text transform="translate(50.00 640.55) rotate(-90)" font-family="Liberation Sans, sans-serif" font-size="8.6" fill="#484848" stroke="#484848" stroke-width="0.25" text-anchor="middle">11</text><path d="M45.60 648.98H48.20" stroke="#484848" stroke-width="1.0" fill="none"/><path d="M44.30 657.41H49.50" stroke="#484848" stroke-width="1.0" fill="none"/><path d="M45.60 665.84H48.20" stroke="#484848" stroke-width="1.0" fill="none"/><text transform="translate(50.00 674.27) rotate(-90)" font-family="Liberation Sans, sans-serif" font-size="8.6" fill="#484848" stroke="#484848" stroke-width="0.25" text-anchor="middle">12</text><path d="M45.60 682.70H48.20" stroke="#484848" stroke-width="1.0" fill="none"/><circle cx="19.7" cy="185.8" r="5.3" fill="none" stroke="#3c3c3c" stroke-width="1"/><path d="M23.5 189.600L26.700 192.600" stroke="#3c3c3c" stroke-width="1.1" fill="none"/><path d="M15.200 210.500H26.200a1.500 1.500 0 0 1 1.500 1.500V218.700a1.500 1.500 0 0 1-1.500 1.500H19.500L16.800 222.900V220.200H15.200a1.500 1.500 0 0 1-1.500-1.500V212a1.500 1.500 0 0 1 1.500-1.500Z" fill="none" stroke="#3c3c3c" stroke-width="1" stroke-linejoin="round"/><path d="M16.20 214.20H25.20" stroke="#3c3c3c" stroke-width="1.0" fill="none"/><path d="M16.20 217.30H22.00" stroke="#3c3c3c" stroke-width="1.0" fill="none"/><path d="M16.90 240.60H22.80" stroke="#3c3c3c" stroke-width="1.0" fill="none"/><path d="M18.50 244.20H25.30" stroke="#3c3c3c" stroke-width="1.0" fill="none"/><path d="M20.20 247.80H26.60" stroke="#3c3c3c" stroke-width="1.0" fill="none"/><path d="M14.30 251.40H22.80" stroke="#3c3c3c" stroke-width="1.0" fill="none"/><circle cx="20.100" cy="277" r="6.600" fill="none" stroke="#3c3c3c" stroke-width="1"/><path d="M20.10 275.80V280.60" stroke="#3c3c3c" stroke-width="1.0" fill="none"/><circle cx="20.100" cy="273.800" r="0.700" fill="#3c3c3c"/><path d="M1273.100 182.100H1266.600a3.200 3.200 0 0 0 0 6.400H1267.800M1267.800 182.100V192.100M1270.800 182.100V192.100" stroke="#3c3c3c" stroke-width="1" fill="none"/><rect x="1261.800" y="211.500" width="13.200" height="10.600" rx="1.200" fill="none" stroke="#9c9c9c" stroke-width="1"/><path d="M1261.800 215H1275M1261.800 218.500H1275M1266.200 211.500V222.100M1270.600 211.500V222.100" stroke="#9c9c9c" stroke-width="1" fill="none"/><rect x="1262.800" y="241.100" width="11.400" height="11.400" rx="1.200" fill="none" stroke="#9c9c9c" stroke-width="1"/><path d="M1263.200 250.800L1267.700 246.300L1273.900 252" stroke="#9c9c9c" stroke-width="1" fill="none"/><circle cx="1270.700" cy="244.500" r="1.100" fill="none" stroke="#9c9c9c" stroke-width="0.9"/><rect x="1263.800" y="271" width="9.400" height="12.500" rx="1.200" fill="none" stroke="#9c9c9c" stroke-width="1"/><rect x="1265.600" y="273.300" width="5.800" height="1.600" fill="none" stroke="#9c9c9c" stroke-width="0.800"/><rect x="1265.600" y="279.600" width="5.800" height="1.600" fill="none" stroke="#9c9c9c" stroke-width="0.800"/><circle cx="1265.800" cy="306.600" r="4.500" fill="none" stroke="#9c9c9c" stroke-width="1"/><rect x="1266.500" y="306.300" width="7.800" height="7.500" rx="1.300" fill="#f3f3f3" stroke="#9c9c9c" stroke-width="1"/><rect x="1262.700" y="339.400" width="2.400" height="3.600" rx="0.600" fill="none" stroke="#9c9c9c" stroke-width="0.900"/><rect x="1267.100" y="336.700" width="2.400" height="6.300" rx="0.600" fill="none" stroke="#9c9c9c" stroke-width="0.900"/><rect x="1271.600" y="332" width="2.600" height="11" rx="0.600" fill="none" stroke="#9c9c9c" stroke-width="0.900"/><path d="M1264.300 369.600L1268.300 361L1272.300 369.600M1265.700 366.700H1270.900M1263.200 373.700Q1268.300 370.500 1273.400 373.700" stroke="#9c9c9c" stroke-width="1" fill="none"/><path d="M1262.800 397.500L1264.800 396V392.200H1272.200V396L1274.200 397.500V402.500a1.300 1.300 0 0 1-1.300 1.300H1264.100a1.300 1.300 0 0 1-1.300-1.300ZM1262.800 397.700L1268.500 401L1274.200 397.700M1266.700 394.500H1269M1266.700 396.500H1268" stroke="#9c9c9c" stroke-width="1" fill="none" stroke-linejoin="round"/><rect x="1238.900" y="163" width="10.400" height="10.200" fill="#f6f6f6" stroke="#c6c6c6" stroke-width="1"/><path d="M1241.400 169.600L1244.100 166.800L1246.800 169.600Z" fill="#8a8a8a"/><rect x="1238.900" y="176" width="10.400" height="236" fill="#f6f6f6" stroke="#c6c6c6" stroke-width="1"/><path d="M1241.80 288.40H1246.30" stroke="#a8a8a8" stroke-width="0.9" fill="none"/><path d="M1241.80 290.20H1246.30" stroke="#a8a8a8" stroke-width="0.9" fill="none"/><path d="M1241.80 292.00H1246.30" stroke="#a8a8a8" stroke-width="0.9" fill="none"/><path d="M1241.80 293.80H1246.30" stroke="#a8a8a8" stroke-width="0.9" fill="none"/><path d="M1241.80 295.60H1246.30" stroke="#a8a8a8" stroke-width="0.9" fill="none"/><path d="M1241.80 297.40H1246.30" stroke="#a8a8a8" stroke-width="0.9" fill="none"/><path d="M1241.80 299.20H1246.30" stroke="#a8a8a8" stroke-width="0.9" fill="none"/><rect x="1238.900" y="672" width="10.400" height="10" fill="#f6f6f6" stroke="#c6c6c6" stroke-width="1"/><path d="M1241.400 675.600L1244.100 678.400L1246.800 675.600Z" fill="#8a8a8a"/></svg>
  <div id="sb">
    <svg class="abs" style="left:0;top:0" width="1280" height="28" viewBox="0 683 1280 28"><path d="M72.80 684.00V711.00" stroke="#dedede" stroke-width="1.0" fill="none"/><path d="M83.00 691.60H94.00" stroke="#3c3c3c" stroke-width="1.0" fill="none"/><path d="M83.00 696.50H94.00" stroke="#3c3c3c" stroke-width="1.0" fill="none"/><text x="82.800" y="702.600" font-family="Liberation Sans, sans-serif" font-size="5.800" font-weight="bold" fill="#4a87e7">12</text><path d="M91.50 700.80H94.00" stroke="#3c3c3c" stroke-width="0.9" fill="none"/><path d="M862.30 684.00V711.00" stroke="#dedede" stroke-width="1.0" fill="none"/><path d="M991.55 697.10L993.70 699.30L995.85 697.10" fill="none" stroke="#3c3c3c" stroke-width="1.15" stroke-linecap="round" stroke-linejoin="round"/><circle cx="1012" cy="697.300" r="6.700" fill="none" stroke="#3c3c3c" stroke-width="1"/><ellipse cx="1012" cy="697.300" rx="2.900" ry="6.700" fill="none" stroke="#3c3c3c" stroke-width="0.900"/><path d="M1005.800 695H1018.200M1005.800 699.600H1018.200" stroke="#3c3c3c" stroke-width="0.900" fill="none"/><rect x="1026.300" y="687" width="20.700" height="20.600" rx="3.500" fill="#e0e0e0"/><path d="M1039.500 703.300H1032.300a1.200 1.200 0 0 1-1.200-1.200V692.900a1.200 1.200 0 0 1 1.200-1.200H1041.500a1.200 1.200 0 0 1 1.200 1.200V698.500" fill="none" stroke="#3c3c3c" stroke-width="1"/><path d="M1034 700.500L1036.900 693.800L1039.800 700.500M1035 698.300H1038.800" fill="none" stroke="#3c3c3c" stroke-width="0.900"/><path d="M1039.800 702L1041.500 703.700L1044.600 700.300" fill="none" stroke="#4a87e7" stroke-width="1.100"/><path d="M1053.20 684.00V711.00" stroke="#dedede" stroke-width="1.0" fill="none"/><path d="M1062.30 693.60H1068.50" stroke="#4a87e7" stroke-width="1.0" fill="none"/><path d="M1062.30 696.60H1066.50" stroke="#4a87e7" stroke-width="1.0" fill="none"/><path d="M1063.500 700H1067.500L1070 702.300L1076.300 695.800a1.700 1.700 0 0 0-2.500-2.500L1067.600 699.800M1072.300 694.800L1074.800 697.300" fill="none" stroke="#3c3c3c" stroke-width="1" stroke-linejoin="round"/><path d="M1085.35 696.70L1087.50 698.90L1089.65 696.70" fill="none" stroke="#3c3c3c" stroke-width="1.15" stroke-linecap="round" stroke-linejoin="round"/><path d="M1101.30 684.00V711.00" stroke="#dedede" stroke-width="1.0" fill="none"/><rect x="1112.100" y="690.800" width="9.500" height="13.300" rx="1.300" fill="none" stroke="#3c3c3c" stroke-width="1"/><path d="M1114 694.500V693H1115.500M1118.200 693H1119.700V694.500M1119.700 700.500V702H1118.200M1115.500 702H1114V700.500" fill="none" stroke="#4a87e7" stroke-width="1.200"/><path d="M1141.200 699.500V692a1.200 1.200 0 0 1 1.200-1.200H1149.300a1.200 1.200 0 0 1 1.200 1.200V699.500" fill="none" stroke="#3c3c3c" stroke-width="1"/><path d="M1140.300 702.700H1151.400M1142.300 700.900L1140.400 702.700L1142.300 704.500M1149.400 700.900L1151.300 702.700L1149.400 704.500" fill="none" stroke="#4a87e7" stroke-width="1.100"/><path d="M1168.00 697.30H1179.40" stroke="#3c3c3c" stroke-width="1.0" fill="none"/><path d="M1260.30 697.30H1272.00" stroke="#3c3c3c" stroke-width="1.0" fill="none"/><path d="M1266.15 691.50V703.10" stroke="#3c3c3c" stroke-width="1.0" fill="none"/></svg>
    <div class="t" style="left:11.5px">Page 1 of 1</div>
    <div class="t" style="left:103px">Word count</div>
    <div class="t" style="left:872px">English – United States</div>
    <div class="t" style="left:1192px">Zoom 100%</div>
  </div>
</div>
<div id="ov"></div>
<div id="frame"></div><div id="frame2"></div>
<div id="ghost">Bitrix24<sup>©</sup></div>
<div class="abs" style="left:319.100px;top:140px;width:16.100px;height:2.500px;background:#bcbc00"></div>
<div id="ring"></div>
<div id="share">SHARE<svg class="abs" style="left:59.200px;top:11.500px" width="11" height="8" viewBox="0 0 11 8"><path d="M1.700 1.600L5.500 5.300L9.300 1.600" fill="none" stroke="#fff" stroke-width="1.600" stroke-linecap="round" stroke-linejoin="round"/></svg></div>
<div id="pop">
  <svg class="abs" style="left:18px;top:12px" width="16" height="16" viewBox="0 0 16 16"><g fill="#8b94a1" stroke="#8b94a1"><path d="M11.300 3.450L4 7.250L11.300 10.900" fill="none" stroke-width="1.600"/><circle cx="11.300" cy="3.450" r="2.400" stroke="none"/><circle cx="4" cy="7.250" r="2.400" stroke="none"/><circle cx="11.300" cy="10.900" r="2.400" stroke="none"/></g></svg>
  <svg class="abs" style="left:17px;top:44px" width="19" height="17" viewBox="0 0 19 17"><g fill="#8b94a1"><ellipse cx="7" cy="3.2" rx="2.3" ry="2.6"/><path d="M5.600 5H8.400V6.600C8.400 7.300 11.800 7.800 11.800 10.300V13.300H1.700V10.300C1.700 7.800 5.600 7.300 5.600 6.600Z"/><ellipse cx="13" cy="4.500" rx="2.100" ry="2.600"/><path d="M11.900 6.500H14.100V7.600C14.100 8 15 8.300 15.600 8.700H12.500C12 8.300 11.900 8 11.900 7.600Z"/></g><g fill="#fff"><rect x="12.700" y="8.400" width="3.800" height="8.200"/><rect x="10.500" y="10.500" width="8.200" height="3.800"/></g><g fill="#8b94a1"><rect x="13.800" y="9.200" width="1.700" height="6.600"/><rect x="11.350" y="11.650" width="6.600" height="1.700"/></g></svg>
  <div class="mi" style="top:12px">Get public link</div>
  <div class="mi" style="top:44px;letter-spacing:-0.1px">Share with users</div>
</div>
</body>
</html>
